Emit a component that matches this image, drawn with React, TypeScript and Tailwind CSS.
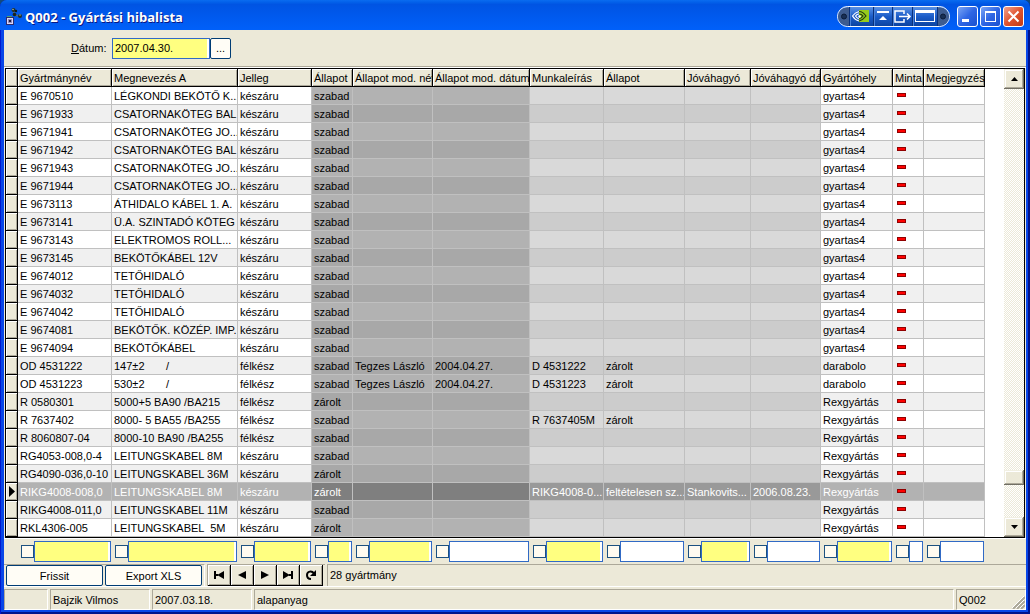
import type { ReactNode } from "react";

type Column = {
    title: string;
    width: number;
    tone: "plain" | "light" | "dark";
    marked: boolean;
};

type Row = string[];

const columns: Column[] = [
    { title: "Gyártmánynév", width: 94, tone: "plain", marked: true },
    { title: "Megnevezés A", width: 126, tone: "plain", marked: true },
    { title: "Jelleg", width: 74, tone: "plain", marked: true },
    { title: "Állapot", width: 41, tone: "dark", marked: true },
    { title: "Állapot mod. név", width: 80, tone: "dark", marked: true },
    { title: "Állapot mod. dátum", width: 97, tone: "dark", marked: false },
    { title: "Munkaleírás", width: 74, tone: "light", marked: true },
    { title: "Állapot", width: 81, tone: "light", marked: false },
    { title: "Jóváhagyó", width: 66, tone: "light", marked: true },
    { title: "Jóváhagyó dá", width: 70, tone: "light", marked: false },
    { title: "Gyártóhely", width: 72, tone: "plain", marked: true },
    { title: "Minta", width: 31, tone: "plain", marked: false },
    { title: "Megjegyzés", width: 61, tone: "plain", marked: false },
];

// name, description, kind, state, modified by, modified on, work, work state, approver, approved on, place
const rows: Row[] = [
    ["E 9670510", "LÉGKONDI BEKÖTŐ K...", "készáru", "szabad", "", "", "", "", "", "", "gyartas4"],
    ["E 9671933", "CSATORNAKÖTEG BAL", "készáru", "szabad", "", "", "", "", "", "", "gyartas4"],
    ["E 9671941", "CSATORNAKÖTEG JO...", "készáru", "szabad", "", "", "", "", "", "", "gyartas4"],
    ["E 9671942", "CSATORNAKÖTEG BAL", "készáru", "szabad", "", "", "", "", "", "", "gyartas4"],
    ["E 9671943", "CSATORNAKÖTEG JO...", "készáru", "szabad", "", "", "", "", "", "", "gyartas4"],
    ["E 9671944", "CSATORNAKÖTEG JO...", "készáru", "szabad", "", "", "", "", "", "", "gyartas4"],
    ["E 9673113", "ÁTHIDALO KÁBEL 1. A.", "készáru", "szabad", "", "", "", "", "", "", "gyartas4"],
    ["E 9673141", "Ü.A. SZINTADÓ KÖTEG", "készáru", "szabad", "", "", "", "", "", "", "gyartas4"],
    ["E 9673143", "ELEKTROMOS ROLL...", "készáru", "szabad", "", "", "", "", "", "", "gyartas4"],
    ["E 9673145", "BEKÖTŐKÁBEL 12V", "készáru", "szabad", "", "", "", "", "", "", "gyartas4"],
    ["E 9674012", "TETŐHIDALÓ", "készáru", "szabad", "", "", "", "", "", "", "gyartas4"],
    ["E 9674032", "TETŐHIDALÓ", "készáru", "szabad", "", "", "", "", "", "", "gyartas4"],
    ["E 9674042", "TETŐHIDALÓ", "készáru", "szabad", "", "", "", "", "", "", "gyartas4"],
    ["E 9674081", "BEKÖTŐK. KÖZÉP. IMP.", "készáru", "szabad", "", "", "", "", "", "", "gyartas4"],
    ["E 9674094", "BEKÖTŐKÁBEL", "készáru", "szabad", "", "", "", "", "", "", "gyartas4"],
    ["OD 4531222", "147±2       /", "félkész", "szabad", "Tegzes László", "2004.04.27.", "D 4531222", "zárolt", "", "", "darabolo"],
    ["OD 4531223", "530±2       /", "félkész", "szabad", "Tegzes László", "2004.04.27.", "D 4531223", "zárolt", "", "", "darabolo"],
    ["R 0580301", "5000+5 BA90 /BA215", "félkész", "zárolt", "", "", "", "", "", "", "Rexgyártás"],
    ["R 7637402", "8000- 5 BA55 /BA255", "félkész", "szabad", "", "", "R 7637405M", "zárolt", "", "", "Rexgyártás"],
    ["R 8060807-04", "8000-10 BA90 /BA255", "félkész", "szabad", "", "", "", "", "", "", "Rexgyártás"],
    ["RG4053-008,0-4", "LEITUNGSKABEL 8M", "készáru", "szabad", "", "", "", "", "", "", "Rexgyártás"],
    ["RG4090-036,0-10", "LEITUNGSKABEL 36M", "készáru", "zárolt", "", "", "", "", "", "", "Rexgyártás"],
    ["RIKG4008-008,0", "LEITUNGSKABEL 8M", "készáru", "zárolt", "", "", "RIKG4008-0...", "feltételesen sz...", "Stankovits...", "2006.08.23.", "Rexgyártás"],
    ["RIKG4008-011,0", "LEITUNGSKABEL 11M", "készáru", "szabad", "", "", "", "", "", "", "Rexgyártás"],
    ["RKL4306-005", "LEITUNGSKABEL  5M", "készáru", "zárolt", "", "", "", "", "", "", "Rexgyártás"],
];

const SELECTED = 22;

// even row, odd row, selected row
const tones = {
    plain: ["bg-white", "bg-[#f0f0f0]", "bg-[#b2b2b2]"],
    light: ["bg-[#d9d9d9]", "bg-[#cccccc]", "bg-[#999999]"],
    dark: ["bg-[#b2b2b2]", "bg-[#a8a8a8]", "bg-[#7f7f7f]"],
};

const raised = "bg-[#ece9d8] shadow-[inset_1px_1px_0_#ffffff,inset_-1px_-1px_0_#aca899]";
const scrollPart =
    "bg-[#ece9d8] shadow-[inset_-1px_-1px_0_#716f64,inset_1px_1px_0_#f1efe2,inset_-2px_-2px_0_#aca899,inset_2px_2px_0_#ffffff]";

function AppIcon() {
    return (
        <svg width="17" height="17" viewBox="0 0 17 17" aria-hidden="true">
            <path d="M8 2v5l6 1" fill="none" stroke="#5d6a66" strokeWidth="1.500" />
            <circle cx="7.500" cy="2" r="2" fill="#20302a" />
            <circle cx="10" cy="3" r="1.200" fill="#101815" />
            <circle cx="8.500" cy="6.500" r="1.800" fill="#18231f" />
            <circle cx="14" cy="8" r="2" fill="#20302a" />
            <circle cx="14" cy="7" r="0.800" fill="#9fb4aa" />
            <circle cx="7" cy="1.500" r="0.800" fill="#9fb4aa" />
            <g shapeRendering="crispEdges">
                <path d="M0 9h8v8H0z" fill="#2c2c70" />
                <path d="M1 10h6v6H1z" fill="#dcd8f6" />
                <path d="M2 11h4v4H2z" fill="#8f8ac2" />
                <path d="M3 12h2v2H3z" fill="#20203c" />
                <path d="M1 8h5v1H1z" fill="#4f9f6f" />
            </g>
        </svg>
    );
}

function NvidiaStrip() {
    return (
        <svg width="113" height="21" viewBox="0 0 113 21" role="img" aria-label="NVIDIA">
            <defs>
                <linearGradient id="pill" x1="0" y1="0" x2="0" y2="1">
                    <stop offset="0" stopColor="#5b93e6" />
                    <stop offset="0.5" stopColor="#1b5cc8" />
                    <stop offset="1" stopColor="#0b429f" />
                </linearGradient>
            </defs>
            <rect x="0.5" y="0.5" width="112" height="20" rx="10" fill="url(#pill)" stroke="#f2f6fd" />
            <path d="M12 1.500h-2a9 9 0 0 0 0 18h2zM101 1.500h2a9 9 0 0 1 0 18h-2z" fill="#3e5c8f" />
            <circle cx="7" cy="10.500" r="2.500" fill="#182f55" stroke="#0b1c38" />
            <circle cx="106" cy="10.500" r="2.500" fill="#182f55" stroke="#0b1c38" />
            <path d="M12.500 1v19M36.500 1v19M55.500 1v19M75.500 1v19M100.500 1v19" stroke="#08307c" />
            <path d="M13.500 1v19M37.500 1v19M56.500 1v19M76.500 1v19" stroke="#4a82d8" />
            <path d="M22 4h10v12H22z" fill="#96cc1c" />
            <path d="M22 5.500q-4 1-6.500 4.500q2.500 4 6.500 5M22 8q-2 0-3.500 2q1.500 2.500 3.500 3" fill="none" stroke="#ffffff" strokeWidth="1.200" />
            <path d="M22 5.500q4 0 7 4.500q-3 4-7 5M22 8q2.500 0 4 2q-2 2.500-4 3" fill="none" stroke="#233a10" strokeWidth="1.200" />
            <circle cx="22.500" cy="10.500" r="1.200" fill="#ffffff" />
            <path d="M40 5h12v2H40zM42 14l4-4 4 4z" fill="#ffffff" />
            <path d="M67 8V5H58v11h9v-3M62 10.500h11M70 7.500l3 3-3 3" fill="none" stroke="#ffffff" strokeWidth="1.500" />
            <path d="M78 4h20v12H78zM79 7v8h18V7z" fill="#ffffff" fillRule="evenodd" />
        </svg>
    );
}

function CaptionButton({ label, close, children }: { label: string; close?: boolean; children: ReactNode }) {
    return (
        <button
            type="button"
            aria-label={label}
            className={`flex h-[21px] w-[21px] items-center justify-center rounded-[3px] border border-white ${
                close
                    ? "bg-linear-to-br from-[#f0a08c] via-[#e0532e] to-[#c03a12]"
                    : "bg-linear-to-br from-[#7ba4f4] via-[#2f66e4] to-[#1a50cf]"
            }`}
        >
            <svg width="19" height="19" viewBox="0 0 19 19" className="shrink-0">
                {children}
            </svg>
        </button>
    );
}

function TitleBar() {
    return (
        <header className="flex h-[30px] items-center rounded-t-[7px] bg-linear-to-b from-[#0a6cf0] via-[#0054e3] via-15% to-[#0060fa] pt-[3px] pr-[6px] pl-[6px]">
            <AppIcon />
            <h1 className="ml-[2px] flex-1 font-['Open_Sans',sans-serif] text-[13px] leading-4 font-bold whitespace-nowrap text-white [text-shadow:1px_1px_0_#0a1883]">
                Q002 - Gyártási hibalista
            </h1>
            <NvidiaStrip />
            <div className="ml-[7px] flex gap-[2px]">
                <CaptionButton label="Kis méret">
                    <path d="M4 12h7v3H4z" fill="#ffffff" />
                </CaptionButton>
                <CaptionButton label="Teljes méret">
                    <path d="M4 4h11v11H4zM5 6v8h9V6z" fill="#ffffff" fillRule="evenodd" />
                </CaptionButton>
                <CaptionButton label="Bezárás" close>
                    <path d="M4.500 4.500l10 10M14.500 4.500l-10 10" stroke="#ffffff" strokeWidth="2" />
                </CaptionButton>
            </div>
        </header>
    );
}

function DateBar() {
    return (
        <div className="flex h-[37px] items-center border-b border-[#aca899] pl-[67px]">
            <label htmlFor="datum" className="w-[41px]">
                <u>D</u>átum:
            </label>
            <input
                id="datum"
                defaultValue="2007.04.30."
                className="h-[21px] w-[98px] border border-[#316ac5] bg-[#ffff80] px-[2px] shadow-[inset_-2px_0_0_#ffffff] outline-none"
            />
            <button
                type="button"
                aria-label="Dátum választása"
                className="h-[21px] w-[21px] rounded-[2px] border border-[#003c74] bg-[#fffdf6]"
            >
                ...
            </button>
        </div>
    );
}

function Grid() {
    return (
        <div className="mx-px flex border border-black bg-white">
            <div className="min-w-0 flex-1 overflow-hidden">
                <table className="w-[979px] table-fixed border-separate border-spacing-0">
                    <colgroup>
                        <col className="w-3" />
                        {columns.map((c, i) => (
                            <col key={i} style={{ width: c.width }} />
                        ))}
                    </colgroup>
                    <thead>
                        <tr className="h-[18px]">
                            <th aria-label="Jelölő" className={`border-r border-b border-black p-0 ${raised}`}></th>
                            {columns.map((c, i) => (
                                <th
                                    key={i}
                                    scope="col"
                                    className={`overflow-hidden border-r border-b border-black p-0 pl-[2px] text-left font-normal whitespace-nowrap ${raised}`}
                                >
                                    {c.title}
                                </th>
                            ))}
                        </tr>
                    </thead>
                    <tbody>
                        {rows.map((row, r) => {
                            const selected = r === SELECTED;
                            const shade = selected ? 2 : r % 2;
                            return (
                                <tr key={row[0]} className="h-[18px]" aria-selected={selected}>
                                    <td className={`border-r border-b border-black p-0 ${raised}`}>
                                        {selected && (
                                            <svg width="11" height="11" viewBox="0 0 11 11" className="block" aria-hidden="true">
                                                <path d="M3 0l6 5.500-6 5.500z" fill="#000000" />
                                            </svg>
                                        )}
                                    </td>
                                    {columns.map((c, i) => (
                                        <td
                                            key={i}
                                            className={`overflow-hidden border-r border-b border-[#c0c0c0] p-0 pl-[2px] whitespace-pre ${tones[c.tone][shade]} ${
                                                selected ? "text-white" : ""
                                            }`}
                                        >
                                            {i === 11 ? (
                                                <span className="mb-px ml-[2px] block h-1 w-[9px] border border-[#900000] bg-[#ff0000]"></span>
                                            ) : (
                                                row[i]
                                            )}
                                        </td>
                                    ))}
                                </tr>
                            );
                        })}
                    </tbody>
                </table>
            </div>
            <div className="flex w-5 flex-col bg-[repeating-conic-gradient(#ffffff_0_25%,#ece9d8_0_50%)] bg-[length:2px_2px]">
                <button type="button" aria-label="Fel" className={`flex h-5 items-center justify-center ${scrollPart}`}>
                    <svg width="7" height="4" viewBox="0 0 7 4">
                        <path d="M0 4l3.500-4L7 4z" />
                    </svg>
                </button>
                <div className="flex-1"></div>
                <div className={`h-[15px] ${scrollPart}`}></div>
                <div className="h-8"></div>
                <button type="button" aria-label="Le" className={`flex h-5 items-center justify-center ${scrollPart}`}>
                    <svg width="7" height="4" viewBox="0 0 7 4">
                        <path d="M0 0l3.500 4L7 0z" />
                    </svg>
                </button>
            </div>
        </div>
    );
}

function FilterRow() {
    return (
        <div className="flex h-[26px] overflow-hidden border-t border-white pl-[14px]">
            {columns.map((c, i) => (
                <div key={i} className="flex shrink-0 items-center pr-px pl-[3px]" style={{ width: c.width }}>
                    <input
                        type="checkbox"
                        aria-label={`${c.title} szűrő`}
                        className="h-[13px] w-[13px] shrink-0 appearance-none border border-[#1c5180] bg-[#fffbf0]"
                    />
                    <input
                        aria-label={`${c.title} szűrőérték`}
                        className={`h-[21px] min-w-0 flex-1 border border-[#316ac5] px-[2px] outline-none ${
                            c.marked ? "bg-[#ffff80] shadow-[inset_-2px_0_0_#ffffff]" : "bg-white"
                        }`}
                    />
                </div>
            ))}
        </div>
    );
}

function NavButton({ label, children }: { label: string; children: ReactNode }) {
    return (
        <button
            type="button"
            aria-label={label}
            className="flex h-[21px] w-[23px] items-center justify-center border-r border-b border-black bg-[#ece9d8] shadow-[inset_1px_1px_0_#ffffff,inset_-1px_-1px_0_#aca899]"
        >
            <svg width="12" height="10" viewBox="0 0 12 10">
                {children}
            </svg>
        </button>
    );
}

function ActionBar() {
    const action = "h-[21px] w-[97px] rounded-[2px] border border-[#003c74] bg-[#fffdf6]";
    return (
        <div className="flex h-[23px] border-b border-white">
            <div className="flex w-[201px] gap-[2px] border-t border-r border-[#aca899] border-r-white pl-[2px]">
                <button type="button" className={action}>
                    Frissit
                </button>
                <button type="button" className={action}>
                    Export XLS
                </button>
            </div>
            <div className="ml-[2px] flex w-[118px] border-t border-l border-[#aca899]">
                <NavButton label="Első">
                    <path d="M1 1h2v8H1zM11 1v8L5 5.500V6H3V4h2v.5z" />
                </NavButton>
                <NavButton label="Előző">
                    <path d="M10 1v8L2 5z" />
                </NavButton>
                <NavButton label="Következő">
                    <path d="M2 1v8l8-4z" />
                </NavButton>
                <NavButton label="Utolsó">
                    <path d="M9 1h2v8H9zM1 1v8l6-3.500V6h2V4H7v.5z" />
                </NavButton>
                <NavButton label="Frissítés">
                    <path d="M9 3.500C7 0.500 2 1 2 5c0 2.500 1.500 4 4 4" fill="none" stroke="#000000" strokeWidth="2" />
                    <path d="M11 0v6H5z" />
                </NavButton>
            </div>
            <output className="ml-[2px] flex-1 border-t border-l border-[#aca899] pl-[2px] leading-[21px]">28 gyártmány</output>
        </div>
    );
}

function StatusBar() {
    const cell = "border-t border-l border-[#aca899] border-r border-b border-r-white border-b-white pl-[2px] leading-5";
    return (
        <footer className="flex h-[21px] gap-[2px] whitespace-nowrap">
            <div className={`w-[44px] ${cell}`}></div>
            <div className={`w-[100px] ${cell}`}>Bajzik Vilmos</div>
            <div className={`w-[100px] ${cell}`}>2007.03.18.</div>
            <div className={`flex-1 ${cell}`}>alapanyag</div>
            <div className={`flex w-[70px] justify-between ${cell}`}>
                Q002
                <svg width="13" height="13" viewBox="0 0 13 13" className="self-end" aria-hidden="true">
                    <path d="M1 13L13 1M5 13l8-8M9 13l4-4" stroke="#aca899" strokeWidth="2" />
                    <path d="M0 12L12 0M4 12l8-8M8 12l4-4" stroke="#ffffff" />
                </svg>
            </div>
        </footer>
    );
}

export default function App() {
    return (
        <div className="bg-[#134a7c]">
            <div className="flex min-h-screen flex-col rounded-t-[7px] bg-[#0846e8] font-['Liberation_Sans',Arial,sans-serif] text-[11px] leading-[14px] text-black shadow-[inset_1px_0_0_#0019cf,inset_-2px_-2px_0_#00138c]">
                <TitleBar />
                <main className="mx-1 mb-1 flex flex-1 flex-col bg-[#ece9d8]">
                    <DateBar />
                    <div className="h-px bg-white"></div>
                    <Grid />
                    <FilterRow />
                    <ActionBar />
                    <div className="h-[2px]"></div>
                    <StatusBar />
                </main>
            </div>
        </div>
    );
}
